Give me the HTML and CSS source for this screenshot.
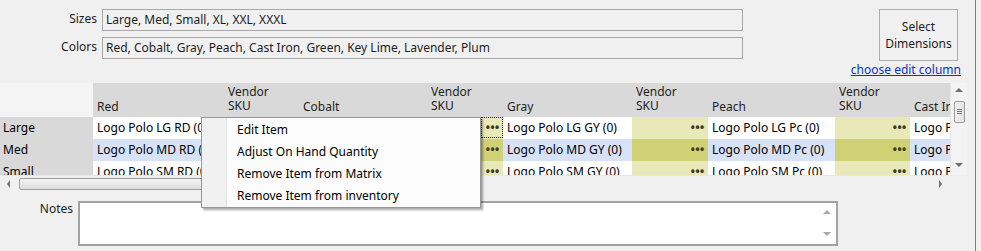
FILE: index.html
```html
<!DOCTYPE html>
<html lang="en">
<head>
  <meta charset="UTF-8">
  <title>item matrix</title>
  <link rel="stylesheet" href="styles.css">
</head>
<body>

<div class="window">
  <div class="panel">

    <div class="top">
      <div class="fields">
        <label class="field-label">Sizes</label>
        <div class="field-box">Large, Med, Small, XL, XXL, XXXL</div>
        <label class="field-label">Colors</label>
        <div class="field-box">Red, Cobalt, Gray, Peach, Cast Iron, Green, Key Lime, Lavender, Plum</div>
      </div>
      <div class="actions">
        <button class="dim-btn">Select<br>Dimensions</button>
        <a class="edit-link" href="#">choose edit column</a>
      </div>
    </div>

    <!-- matrix grid -->
    <div class="matrix">
      <div class="cells">
        <div class="hd corner-hd"></div>
        <div class="hd color-hd">Red</div>
        <div class="hd sku-hd">Vendor<br>SKU</div>
        <div class="hd color-hd">Cobalt</div>
        <div class="hd sku-hd">Vendor<br>SKU</div>
        <div class="hd color-hd">Gray</div>
        <div class="hd sku-hd">Vendor<br>SKU</div>
        <div class="hd color-hd">Peach</div>
        <div class="hd sku-hd">Vendor<br>SKU</div>
        <div class="hd color-hd">Cast Iron</div>

        <div class="row-hd">Large</div>
        <div class="cell">Logo Polo LG RD (0)</div>
        <div class="sku"><span class="dots">•••</span></div>
        <div class="cell">Logo Polo LG CB (0)</div>
        <div class="sku"><span class="dots focus">•••</span></div>
        <div class="cell">Logo Polo LG GY (0)</div>
        <div class="sku"><span class="dots">•••</span></div>
        <div class="cell">Logo Polo LG Pc (0)</div>
        <div class="sku"><span class="dots">•••</span></div>
        <div class="cell">Logo Polo LG CI (0)</div>

        <div class="row-hd">Med</div>
        <div class="cell sel">Logo Polo MD RD (0)</div>
        <div class="sku sel"><span class="dots">•••</span></div>
        <div class="cell sel">Logo Polo MD CB (0)</div>
        <div class="sku sel"><span class="dots">•••</span></div>
        <div class="cell sel">Logo Polo MD GY (0)</div>
        <div class="sku sel"><span class="dots">•••</span></div>
        <div class="cell sel">Logo Polo MD Pc (0)</div>
        <div class="sku sel"><span class="dots">•••</span></div>
        <div class="cell sel">Logo Polo MD CI (0)</div>

        <div class="row-hd">Small</div>
        <div class="cell">Logo Polo SM RD (0)</div>
        <div class="sku"><span class="dots">•••</span></div>
        <div class="cell">Logo Polo SM CB (0)</div>
        <div class="sku"><span class="dots">•••</span></div>
        <div class="cell">Logo Polo SM GY (0)</div>
        <div class="sku"><span class="dots">•••</span></div>
        <div class="cell">Logo Polo SM Pc (0)</div>
        <div class="sku"><span class="dots">•••</span></div>
        <div class="cell">Logo Polo SM CI (0)</div>
      </div>

      <div class="vscroll">
        <span class="arrow up"></span>
        <span class="vthumb"><span class="grip"></span></span>
        <span class="arrow down"></span>
      </div>
      <div class="hscroll">
        <span class="arrow left"></span>
        <span class="hthumb"></span>
        <span class="arrow right"></span>
      </div>
      <div class="scroll-corner"></div>
    </div>

    <div class="notes">
      <label class="notes-label">Notes</label>
      <div class="notes-box">
        <div class="notes-scroll">
          <span class="arrow up light"></span>
          <span class="arrow down light"></span>
        </div>
      </div>
    </div>

  </div>
  <div class="divider"></div>
</div>

<!-- right click menu -->
<div class="context-menu">
  <div class="menu-item">Edit Item</div>
  <div class="menu-item">Adjust On Hand Quantity</div>
  <div class="menu-item">Remove Item from Matrix</div>
  <div class="menu-item">Remove Item from inventory</div>
</div>

</body>
</html>
```

FILE: styles.css
```css
body {
  margin: 0;
  background: #f0f0f0;
  color: #000;
  font-family: "Noto Sans", "Open Sans", sans-serif;
  font-size: 12px;
  width: 981px;
  height: 251px;
  overflow: hidden;
  position: relative;
}

.window {
  display: flex;
  height: 251px;
}

.panel {
  width: 975px;
}

.divider {
  width: 1px;
  background: #7c7c7c;
}

/* top fields */
.top {
  display: flex;
  height: 83px;
}

.fields {
  display: grid;
  grid-template-columns: 97px 641px;
  grid-auto-rows: 22px;
  column-gap: 5px;
  row-gap: 6px;
  padding-top: 9px;
  align-content: start;
}

.field-label {
  text-align: right;
  line-height: 20px;
  color: #1e1e1e;
}

.field-box {
  box-sizing: border-box;
  border: 1px solid #a9a9a9;
  padding: 0 3px;
  line-height: 20px;
  color: #1e1e1e;
  white-space: nowrap;
  overflow: hidden;
}

.actions {
  display: flex;
  flex-direction: column;
  align-items: flex-end;
  margin-left: 136px;
  padding-top: 9px;
  width: 82px;
}

.dim-btn {
  width: 79px;
  height: 52px;
  margin-right: 3px;
  border: 1px solid #adadad;
  background: #f0f0f0;
  font-family: inherit;
  font-size: 12px;
  line-height: 17px;
  color: #1e1e1e;
  padding: 0;
}

.edit-link {
  margin-top: 2px;
  color: #0b33c8;
  line-height: 14px;
  white-space: nowrap;
}

/* grid */
.matrix {
  display: grid;
  grid-template-columns: 950px 17px;
  grid-template-rows: 92px 16px;
}

.cells {
  display: grid;
  grid-template-columns: 93px 131px 75px 128px 76px 129px 76px 127px 75px 130px;
  grid-template-rows: 34px 22px 22px 22px;
  overflow: hidden;
  white-space: nowrap;
}

.hd {
  background: #d9d9d9;
  color: #1e1e1e;
  padding: 0 4px;
  overflow: hidden;
}

.corner-hd {
  background: #f5f5f5;
}

.color-hd {
  display: flex;
  align-items: flex-end;
  padding-bottom: 2px;
}

.sku-hd {
  padding-top: 2px;
  line-height: 14px;
}

.row-hd {
  background: #d9d9d9;
  padding-left: 3px;
  line-height: 22px;
}

.cell {
  background: #fff;
  padding-left: 4px;
  line-height: 22px;
  overflow: hidden;
}

.cell.sel {
  background: #d8e2f7;
}

.sku {
  background: #e8e8b8;
  display: flex;
  justify-content: flex-end;
}

.sku.sel {
  background: #d0d074;
}

.dots {
  box-sizing: border-box;
  width: 22px;
  height: 21px;
  text-align: center;
  font-size: 15px;
  letter-spacing: -1px;
  line-height: 21px;
  color: #3b3b24;
  overflow: hidden;
}

.dots.focus {
  border: 1px dotted #222;
  line-height: 19px;
}

/* scrollbars */
.vscroll, .hscroll, .scroll-corner, .notes-scroll {
  background: #f0f0f0;
  position: relative;
}

.vscroll {
  border-left: 1px solid #e6e6e6;
  background: #f3f3f3;
}

.arrow {
  position: absolute;
  width: 0;
  height: 0;
  border: 4px solid transparent;
}

.arrow.up { top: 5px; left: 4px; border-bottom-color: #6f6f6f; border-top-width: 0; }
.arrow.down { bottom: 8px; left: 4px; border-top-color: #6f6f6f; border-bottom-width: 0; }
.arrow.left { top: 4px; left: 7px; border-right-color: #6f6f6f; border-width: 4px 3px 4px 0; }
.arrow.right { top: 4px; right: 6px; border-left-color: #6f6f6f; border-width: 4px 0 4px 3px; }
.arrow.light.up { border-bottom-color: #a8a8a8; top: 7px; }
.arrow.light.down { border-top-color: #a8a8a8; bottom: 8px; }

.vthumb {
  position: absolute;
  top: 18px;
  left: 3px;
  width: 11px;
  height: 22px;
  box-sizing: border-box;
  border: 1px solid #9e9e9e;
  border-radius: 2px;
  background: linear-gradient(to right, #f2f2f2, #e2e2e2);
}

.grip {
  position: absolute;
  left: 2px;
  top: 7px;
  width: 5px;
  height: 5px;
  border-top: 1px solid #777;
  border-bottom: 1px solid #777;
  box-sizing: border-box;
}

.grip::after {
  content: "";
  position: absolute;
  left: 0;
  right: 0;
  top: 1px;
  border-top: 1px solid #777;
}

.hscroll {
  grid-column: 1;
  border-top: 1px solid #e6e6e6;
  margin-right: 2px;
}

.hthumb {
  position: absolute;
  left: 19px;
  top: 2px;
  width: 300px;
  height: 12px;
  box-sizing: border-box;
  border: 1px solid #9e9e9e;
  border-radius: 2px;
  background: linear-gradient(#f4f4f4, #dcdcdc);
}

.scroll-corner {
  background: #f0f0f0;
}

/* notes */
.notes {
  display: flex;
  margin-top: 10px;
}

.notes-label {
  width: 73px;
  text-align: right;
  color: #1e1e1e;
  line-height: 16px;
}

.notes-box {
  margin-left: 5px;
  width: 760px;
  height: 45px;
  box-sizing: border-box;
  border: 2px solid #a3a3a3;
  background: #fff;
  display: flex;
  justify-content: flex-end;
}

.notes-scroll {
  width: 17px;
  background: #fff;
}

/* context menu */
.context-menu {
  position: absolute;
  left: 201px;
  top: 117px;
  width: 280px;
  height: 91px;
  box-sizing: border-box;
  border: 1px solid #979797;
  background: linear-gradient(to right, #f1f1f1 0, #f1f1f1 24px, #e2e3e3 24px, #e2e3e3 25px, #fff 25px, #fff 26px, #fcfcfc 26px);
  box-shadow: 2px 2px 2px rgba(0, 0, 0, 0.35);
  padding-top: 1px;
}

.menu-item {
  height: 22px;
  line-height: 22px;
  padding-left: 35px;
  color: #000;
}
```
